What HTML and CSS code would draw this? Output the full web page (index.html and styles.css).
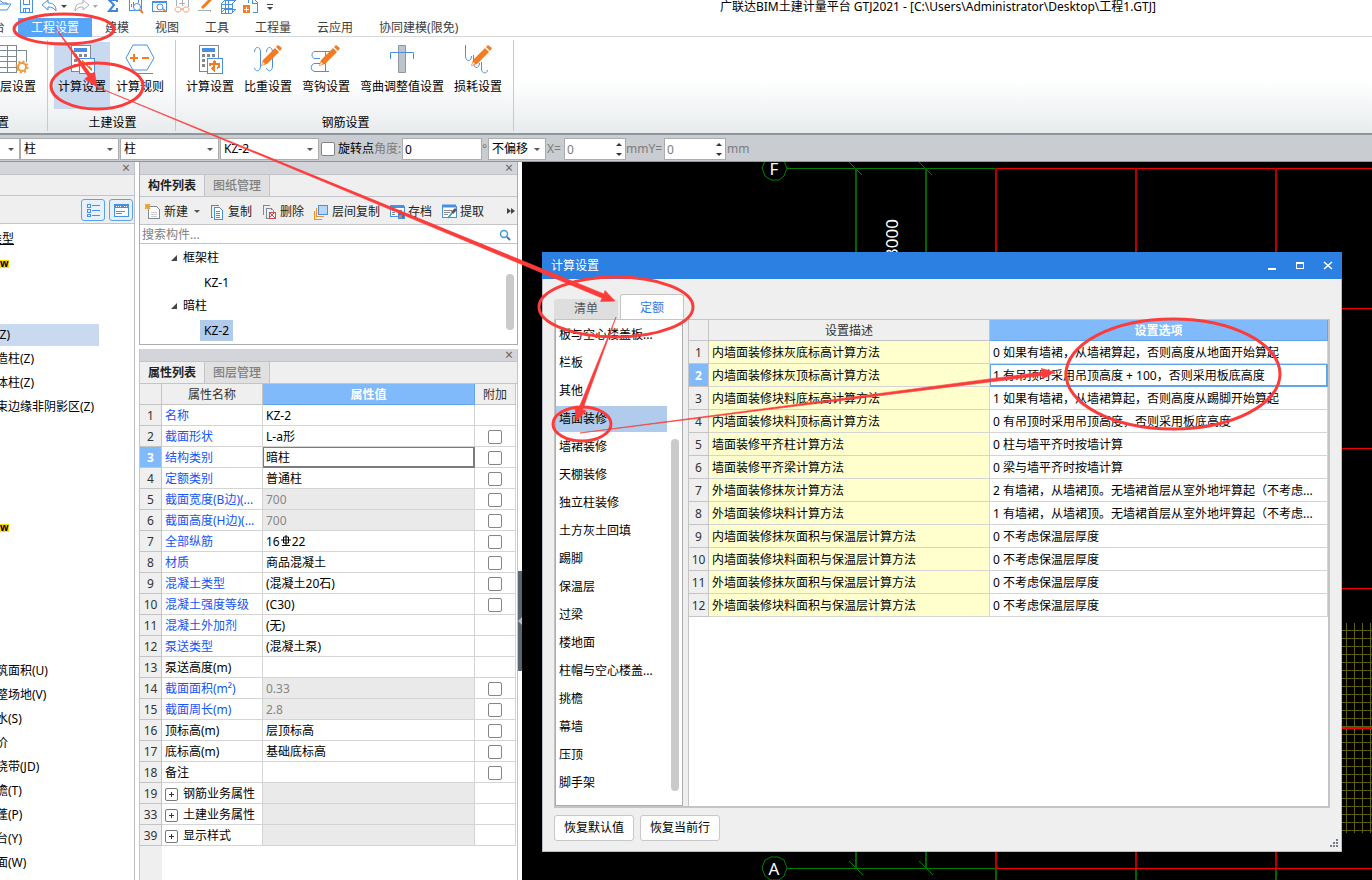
FILE: index.html
```html
<!DOCTYPE html>
<html lang="zh-CN">
<head>
<meta charset="utf-8">
<title>广联达BIM土建计量平台 GTJ2021</title>
<link rel="stylesheet" href="styles.css">
</head>
<body>
<div class="app">
  <header class="titlebar">
    <div class="quick">
      <button aria-label="打开"><svg width="16" height="14" class="ln b"><path d="M1 10V1h5l2 2h4v2M1 10l4-6h11l-4 6z"/></svg></button>
      <button aria-label="保存"><svg width="16" height="14" class="ln b cr"><path d="M2 -2h12v14H2zM5 -2v6h6v-6M5 12V8h6V12M7 12V9"/></svg></button>
      <button aria-label="撤销"><svg width="26" height="14" class="ln b"><path d="M1 5l6-5v3c5 0 8 2 8 8-2-3-4-4-8-4v3z"/><path class="fd" d="M20 5h6l-3 3z"/></svg></button>
      <button aria-label="恢复"><svg width="24" height="14" class="ln g"><path d="M15 5l-6-5v3C4 3 1 5 1 11c2-3 4-4 8-4v3z"/><path class="fg" d="M19 5h5l-3 3z"/></svg></button>
      <button aria-label="汇总"><svg width="16" height="14" class="ln b2"><path d="M12 2V0H4l5 5-5 6h8V8"/></svg></button>
      <button aria-label="查看计算式"><svg width="16" height="14" class="ln b"><path class="cr" d="M1 -2h12v12H1zM3 7V4M5 7V2M7 7V4M10 0v3"/><circle cx="9" cy="7" r="3.500" fill="#fff"/><path class="o2" d="M12 10l3 3"/></svg></button>
      <button aria-label="查看工程量"><svg width="16" height="14" class="ln b"><path class="cr" d="M1 1h14v10H1z"/><path d="M1 2h14" stroke-width="2"/><circle cx="9" cy="7" r="3" fill="#fff"/><path class="o2" d="M12 9l3 3"/></svg></button>
      <button aria-label="查看钢筋"><svg width="16" height="14" class="ln g"><path class="cr" d="M2 -2h12v9M2 -2v8M5 3h6M8 0v6"/><path class="o1" d="M4 7c-4 0-4 5 0 5s4-5 0-5M12 7c-4 0-4 5 0 5s4-5 0-5M6 9h4"/></svg></button>
      <button aria-label="编辑"><svg width="16" height="14" class="ln g"><path class="cr" d="M1 10h12v2"/><path stroke="#f47b20" stroke-width="3" d="M14-1L5 8"/></svg></button>
      <button aria-label="三维"><svg width="16" height="14" class="ln b cr"><path d="M1 4l4-4h11v9l-4 4H1zM1 4h11v9M12 4l4-4M5 0v9h11M5 9l-4 4M1 8h11M5 4v9M8 4v9M8 0v9"/></svg></button>
      <button aria-label="新增"><svg width="16" height="14" class="ln b cr"><path d="M5 3V-2h5l4 4v10h-4M9-1v4h5"/><path fill="#f47b20" stroke="none" d="M0 5h7v8H0z"/><path stroke="#fff" d="M3.500 6.500v5M1 9h5"/></svg></button>
      <button aria-label="更多"><svg width="8" height="14"><path class="fd" d="M1 4h6v1H1zM1 7h6L4 10z"/></svg></button>
    </div>
    <h1>广联达BIM土建计量平台 GTJ2021 - [C:\Users\Administrator\Desktop\工程1.GTJ]</h1>
  </header>

  <nav class="menu">
    <a href="#">台</a><a href="#" class="on">工程设置</a><a href="#">建模</a><a href="#">视图</a><a href="#">工具</a><a href="#">工程量</a><a href="#">云应用</a><a href="#">协同建模(限免)</a>
  </nav>

  <section class="ribbon">
    <div class="group first">
      <div class="tools">
        <button><svg width="32" height="32" class="ln d"><path class="cr" d="M0 2h16v27H0M0 7h16M0 13h16M0 18h16M0 24h16M7 2v27M16 7h10v12"/><circle cx="22" cy="24" r="4" stroke="#f09a3a" stroke-width="2" fill="#fff"/><circle cx="22" cy="24" r="5.500" stroke="#f09a3a" stroke-width="2" stroke-dasharray="2 2.300"/></svg><span>层设置</span></button>
      </div>
      <div class="cap">置</div>
    </div>
    <div class="group g2">
      <div class="tools">
        <button class="on"><svg width="32" height="32" class="ln d cr"><path fill="#fff" d="M5 2h19v26H5z"/><path fill="#4a90e2" stroke="none" d="M8 5h13v4H8z"/><path stroke-width="3" stroke-dasharray="3 2" d="M8 12.500h14M8 17.500h5M8 22.500h5"/><path stroke="#4a90e2" fill="#fff" d="M13 15h15v15H13z"/><path stroke="#f47b20" stroke-width="2" d="M16 18l10 9"/></svg><span>计算设置</span></button>
        <button><svg width="32" height="32" class="ln b"><path d="M9 2h14l7 13-7 12H9L2 15z"/><path class="cr" d="M9 30h20"/><path stroke="#f47b20" stroke-width="2" d="M6 15h8M10 11v8M18 15h7"/></svg><span>计算规则</span></button>
      </div>
      <div class="cap">土建设置</div>
    </div>
    <div class="group g3">
      <div class="tools">
        <button><svg width="32" height="32" class="ln d cr"><path fill="#fff" d="M5 2h19v26H5z"/><path fill="#4a90e2" stroke="none" d="M8 5h13v4H8z"/><path stroke-width="3" stroke-dasharray="3 2" d="M8 12.500h14M8 17.500h5M8 22.500h5"/><path stroke="#4a90e2" fill="#fff" d="M13 15h15v15H13z"/><path stroke="#f47b20" stroke-width="2" d="M20 18v9l-2-2M16 23v-2h9v3l-2 1M20 18l2 2"/></svg><span>计算设置</span></button>
        <button><svg width="32" height="32" class="ln b"><path d="M2.500 9c0-6 6-6 6 0v14c0 6-5 6-6 2M14.500 9c0-6 6-6 6 0v14c0 6-5 6-6 2"/><use href="#pencil"/></svg><span>比重设置</span></button>
        <button><svg width="32" height="32" class="ln b"><path d="M20 8.500H5c-4 0-4 7 0 7h5M13 20.500H5c-5 0-5 8 0 8h14M15.500 8v20M12 8.500h6M12 28.500h6"/><use href="#pencil"/></svg><span>弯钩设置</span></button>
        <button><svg width="32" height="32" class="ln b"><path fill="#bcc3c9" stroke="#8f989f" d="M12.500 2.500h7v27h-7z"/><path d="M4.500 16V9.500h23V16"/></svg><span>弯曲调整值设置</span></button>
        <button><svg width="32" height="32" class="ln b"><path d="M3.500 2v11c0 6 6 6 6 0M11.500 12v8c0 6 6 6 6 0M19.500 19v7c0 5 6 5 6 1"/><use href="#pencil"/></svg><span>损耗设置</span></button>
      </div>
      <div class="cap">钢筋设置</div>
    </div>
  </section>

  <form class="options">
    <label class="sel w0"><select aria-label="楼层"><option></option></select></label>
    <label class="sel w1"><select aria-label="构件大类"><option>柱</option></select></label>
    <label class="sel w1"><select aria-label="构件类型"><option>柱</option></select></label>
    <label class="sel w1"><select aria-label="构件"><option>KZ-2</option></select></label>
    <label class="chk"><input type="checkbox">旋转点</label>
    <label class="fld"><span class="dim">角度:</span><input class="ang" type="text" value="0"><span class="deg dim">°</span></label>
    <label class="sel w2"><select aria-label="偏移"><option>不偏移</option></select></label>
    <label class="fld dim"><span class="x">X=</span><span class="spin"><input type="text" value="0"></span></label>
    <label class="fld dim"><span class="y">mmY=</span><span class="spin"><input type="text" value="0"></span><span class="mm">mm</span></label>
  </form>

  <main>
    <aside class="left">
      <div class="strip"><button aria-label="关闭">×</button></div>
      <div class="blank"></div>
      <div class="views">
        <button aria-label="列表"><svg width="14" height="14" class="ln b cr"><path d="M1 1h3v3H1zM1 6h3v3H1zM1 11h3v2H1zM6 2h8M6 7h8M6 12h8"/></svg></button>
        <button aria-label="卡片"><svg width="16" height="14" class="ln b cr"><path fill="#fff" d="M1 1h14v12H1zM3 8h9M3 10h6"/><path stroke-width="4" d="M1 3h14"/><path stroke="#fff" stroke-dasharray="1 1" d="M3 3h5M11 3h3"/></svg></button>
      </div>
      <ul>
        <li class="root">类型</li><li><b>w</b></li><li></li><li></li>
        <li class="on">(Z)</li><li>造柱(Z)</li><li>体柱(Z)</li><li>束边缘非阴影区(Z)</li>
        <li></li><li></li><li></li><li></li><li><b>w</b></li><li></li><li></li><li></li><li></li><li></li>
        <li>筑面积(U)</li><li>整场地(V)</li><li>水(S)</li><li>价</li><li>浇带(JD)</li><li>檐(T)</li><li>蓬(P)</li><li>台(Y)</li><li>面(W)</li>
      </ul>
    </aside>

    <div class="center">
      <section class="panel list">
        <div class="strip"><button aria-label="关闭">×</button></div>
        <div class="tabs"><button class="on">构件列表</button><button>图纸管理</button></div>
        <div class="bar">
          <button><svg width="18" height="16" class="ln d"><path class="cr" fill="#fff" d="M5 2h6l3 3v9H3V5"/><path class="cr" d="M6 8h6M6 10h6M6 12h6" stroke="#ccc"/><path stroke="#f4a020" stroke-width="1.500" d="M0 0l5 5M5 0L0 5M2.500 0v5M0 2.500h5"/></svg>新建<i class="tri"></i></button>
          <button><svg width="18" height="16" class="ln b cr"><path stroke="#788088" d="M10 1H2v12h2"/><path fill="#fff" d="M5 3h5l3 3v9H5z"/><path d="M7 7h4M7 9h4M7 11h4M7 13h4"/></svg>复制</button>
          <button><svg width="18" height="16" class="ln d cr"><path d="M9 1H2v9h1M12 8V6l-3-2H5v10h3"/><path fill="#fff" stroke="#d84848" d="M8 8h6v6H8zM8 8l6 6M14 8l-6 6"/></svg>删除</button>
          <button><svg width="18" height="16" class="ln b cr"><path fill="#b6d6fb" d="M5 1h9v9H5z"/><path stroke="#f09030" d="M3 4v8h8M1 7v8h8"/></svg>层间复制</button>
          <button><svg width="18" height="16" class="ln b cr"><path fill="#fff" d="M1 2h14v10H1z"/><path stroke-width="3" d="M1 2h14"/><path stroke="#888" d="M3 6h3M3 8h3M3 10h3M7 6h6"/><path fill="#2f70c8" d="M9 8h6v6H9z"/><path fill="#f47b20" stroke="none" d="M10 11h3v3h-3z"/></svg>存档</button>
          <button><svg width="18" height="16" class="ln b"><path class="cr" fill="#fff" d="M1 2h14v11H1z"/><path stroke-width="3" d="M1 2h14"/><path class="cr" stroke="#888" d="M3 6h8M3 8h6M3 10h4"/><path stroke="#555" stroke-width="3" d="M15 5l-4 4"/><path stroke="#3aa8b8" stroke-width="2" d="M11 9l-4 5"/></svg>提取</button>
          <button class="more" aria-label="更多"><svg width="8" height="8"><path class="fd" d="M0 0l4 3-4 3zM4 0l4 3-4 3z"/></svg></button>
        </div>
        <label class="search"><input type="search" placeholder="搜索构件..." aria-label="搜索构件"><svg width="12" height="12" class="ln"><circle cx="5" cy="5" r="3.500" stroke="#3d9ad0" stroke-width="1.500"/><path stroke="#3d7ac0" stroke-width="2" d="M8 8l3 3"/></svg></label>
        <div class="tree">
          <ul>
            <li class="p"><svg width="8" height="8"><path class="fd" d="M7 1v6H1z"/></svg>框架柱</li>
            <li class="c"><span>KZ-1</span></li>
            <li class="p"><svg width="8" height="8"><path class="fd" d="M7 1v6H1z"/></svg>暗柱</li>
            <li class="c"><span class="on">KZ-2</span></li>
          </ul>
          <i class="thumb"></i>
        </div>
      </section>

      <section class="panel props">
        <div class="strip"><button aria-label="关闭">×</button></div>
        <div class="tabs"><button class="on">属性列表</button><button>图层管理</button></div>
        <div class="grid">
          <table>
            <colgroup><col class="c1"><col class="c2"><col><col class="c4"></colgroup>
            <thead><tr><th></th><th>属性名称</th><th class="hl">属性值</th><th>附加</th></tr></thead>
            <tbody>
            <tr><th>1</th><td class="k">名称</td><td>KZ-2</td><td></td></tr>
            <tr><th>2</th><td class="k">截面形状</td><td>L-a形</td><td><input type="checkbox" aria-label="附加 截面形状"></td></tr>
            <tr class="cur"><th>3</th><td class="k">结构类别</td><td class="edit">暗柱</td><td><input type="checkbox" aria-label="附加 结构类别"></td></tr>
            <tr><th>4</th><td class="k">定额类别</td><td>普通柱</td><td><input type="checkbox" aria-label="附加 定额类别"></td></tr>
            <tr><th>5</th><td class="k">截面宽度(B边)(...</td><td class="ro">700</td><td><input type="checkbox" aria-label="附加 截面宽度"></td></tr>
            <tr><th>6</th><td class="k">截面高度(H边)(...</td><td class="ro">700</td><td><input type="checkbox" aria-label="附加 截面高度"></td></tr>
            <tr><th>7</th><td class="k">全部纵筋</td><td>16<svg class="bar-sym" width="12" height="12"><path fill="none" stroke="#000" d="M6 0v10M3.500 2v6h5V2zM1 5h10M2 10.500h8"/></svg>22</td><td><input type="checkbox" aria-label="附加 全部纵筋"></td></tr>
            <tr><th>8</th><td class="k">材质</td><td>商品混凝土</td><td><input type="checkbox" aria-label="附加 材质"></td></tr>
            <tr><th>9</th><td class="k">混凝土类型</td><td>(混凝土20石)</td><td><input type="checkbox" aria-label="附加 混凝土类型"></td></tr>
            <tr><th>10</th><td class="k">混凝土强度等级</td><td>(C30)</td><td><input type="checkbox" aria-label="附加 混凝土强度等级"></td></tr>
            <tr><th>11</th><td class="k">混凝土外加剂</td><td>(无)</td><td></td></tr>
            <tr><th>12</th><td class="k">泵送类型</td><td>(混凝土泵)</td><td></td></tr>
            <tr><th>13</th><td>泵送高度(m)</td><td></td><td></td></tr>
            <tr><th>14</th><td class="k">截面面积(m²)</td><td class="ro">0.33</td><td><input type="checkbox" aria-label="附加 截面面积"></td></tr>
            <tr><th>15</th><td class="k">截面周长(m)</td><td class="ro">2.8</td><td><input type="checkbox" aria-label="附加 截面周长"></td></tr>
            <tr><th>16</th><td>顶标高(m)</td><td>层顶标高</td><td><input type="checkbox" aria-label="附加 顶标高"></td></tr>
            <tr><th>17</th><td>底标高(m)</td><td>基础底标高</td><td><input type="checkbox" aria-label="附加 底标高"></td></tr>
            <tr><th>18</th><td>备注</td><td></td><td><input type="checkbox" aria-label="附加 备注"></td></tr>
            <tr><th>19</th><td><button class="plus" aria-label="展开"></button>钢筋业务属性</td><td class="ro"></td><td></td></tr>
            <tr><th>33</th><td><button class="plus" aria-label="展开"></button>土建业务属性</td><td class="ro"></td><td></td></tr>
            <tr><th>39</th><td><button class="plus" aria-label="展开"></button>显示样式</td><td class="ro"></td><td></td></tr>
            </tbody>
          </table>
        </div>
      </section>
    </div>

    <div class="gutter"><button aria-label="收起"><svg width="4" height="8"><path fill="#b8c0c6" d="M4 0v8L0 4z"/></svg></button></div>

    <div class="canvas">
      <svg class="cad" width="850" height="718" fill="none" shape-rendering="crispEdges">
        <g stroke="#5f5f0c">
          <path d="M820 468.500h30M820 476.500h30M820 484.500h30M820 492.500h30M820 500.500h30M820 508.500h30M820 516.500h30M820 524.500h30M820 532.500h30M820 540.500h30M820 548.500h30M820 556.500h30M820 564.500h30M820 572.500h30M820 580.500h30M820 588.500h30M820 596.500h30M820 604.500h30M820 612.500h30M820 620.500h30M820 628.500h30M820 636.500h30M820 644.500h30M820 652.500h30M820 660.500h30M820 668.500h30M824.500 461v210M832.500 461v210M840.500 461v210M848.500 461v210"/>
        </g>
        <g stroke="#008000">
          <path d="M265 6.500h209M265 706.500h209M327 0l13 13M397 0l13 13M327 699l14 14M397 699l14 14"/>
          <path stroke="#006400" stroke-width="2" d="M334 6v700M404 6v700M474 706v12M614 706v12M754 706v12"/>
          <path shape-rendering="auto" d="M240 6l3-7 6-4h7l6 4 3 7-3 8-5 4h-8l-6-4zM240 706l3-8 6-3h7l6 3 3 8-3 8-5 4h-8l-6-4z"/>
        </g>
        <g stroke="#f00000">
          <path d="M474 6.500h376M474 706.500h376M820 146.500h30M820 286.500h30M820 426.500h30"/>
          <path stroke="#b80000" stroke-width="2" d="M474 6v700M614 6v700M754 6v700"/>
          <path stroke-width="2" d="M820 566h30"/>
        </g>
        <g class="cadtext"><text x="252" y="13" text-anchor="middle">F</text><text x="252" y="713" text-anchor="middle">A</text><text transform="translate(376 57) rotate(-90)" text-anchor="end">3000</text></g>
      </svg>

      <section class="dialog" role="dialog" aria-label="计算设置">
        <header><h2>计算设置</h2>
          <button aria-label="最小化"><svg width="12" height="12"><path fill="#fff" d="M2 8h8v2H2z"/></svg></button>
          <button aria-label="最大化"><svg width="12" height="12"><path fill="#fff" fill-rule="evenodd" d="M2 2h8v7H2zM3 4v4h6V4z"/></svg></button>
          <button aria-label="关闭"><svg width="12" height="12"><path stroke="#fff" stroke-width="1.500" d="M2 2l8 7M10 2l-8 7"/></svg></button>
        </header>
        <div class="dtabs"><button>清单</button><button class="on">定额</button></div>
        <div class="dbody">
          <div class="cats">
            <ul>
              <li>板与空心楼盖板...</li><li>栏板</li><li>其他</li><li class="on">墙面装修</li><li>墙裙装修</li><li>天棚装修</li><li>独立柱装修</li><li>土方灰土回填</li><li>踢脚</li><li>保温层</li><li>过梁</li><li>楼地面</li><li>柱帽与空心楼盖...</li><li>挑檐</li><li>幕墙</li><li>压顶</li><li>脚手架</li>
            </ul>
            <i class="thumb"></i>
          </div>
          <div class="rules">
            <table>
              <colgroup><col class="r1"><col class="r2"><col></colgroup>
              <thead><tr><th></th><th>设置描述</th><th class="hl">设置选项</th></tr></thead>
              <tbody>
              <tr><th>1</th><td>内墙面装修抹灰底标高计算方法</td><td>0 如果有墙裙，从墙裙算起，否则高度从地面开始算起</td></tr>
              <tr class="cur"><th>2</th><td>内墙面装修抹灰顶标高计算方法</td><td class="edit">1 有吊顶时采用吊顶高度 + 100，否则采用板底高度</td></tr>
              <tr><th>3</th><td>内墙面装修块料底标高计算方法</td><td>1 如果有墙裙，从墙裙算起，否则高度从踢脚开始算起</td></tr>
              <tr><th>4</th><td>内墙面装修块料顶标高计算方法</td><td>0 有吊顶时采用吊顶高度，否则采用板底高度</td></tr>
              <tr><th>5</th><td>墙面装修平齐柱计算方法</td><td>0 柱与墙平齐时按墙计算</td></tr>
              <tr><th>6</th><td>墙面装修平齐梁计算方法</td><td>0 梁与墙平齐时按墙计算</td></tr>
              <tr><th>7</th><td>外墙面装修抹灰计算方法</td><td>2 有墙裙，从墙裙顶。无墙裙首层从室外地坪算起（不考虑...</td></tr>
              <tr><th>8</th><td>外墙面装修块料计算方法</td><td>1 有墙裙，从墙裙顶。无墙裙首层从室外地坪算起（不考虑...</td></tr>
              <tr><th>9</th><td>内墙面装修抹灰面积与保温层计算方法</td><td>0 不考虑保温层厚度</td></tr>
              <tr><th>10</th><td>内墙面装修块料面积与保温层计算方法</td><td>0 不考虑保温层厚度</td></tr>
              <tr><th>11</th><td>外墙面装修抹灰面积与保温层计算方法</td><td>0 不考虑保温层厚度</td></tr>
              <tr><th>12</th><td>外墙面装修块料面积与保温层计算方法</td><td>0 不考虑保温层厚度</td></tr>
              </tbody>
            </table>
          </div>
        </div>
        <footer><button>恢复默认值</button><button>恢复当前行</button>
          <svg class="grip" width="8" height="8"><path fill="#777f88" d="M6 0h2v2H6zM3 3h2v2H3zM6 3h2v2H6zM0 6h2v2H0zM3 6h2v2H3zM6 6h2v2H6z"/></svg>
        </footer>
      </section>
    </div>
  </main>

  <svg class="marks" width="1372" height="880" aria-hidden="true">
    <defs><g id="pencil" stroke="none"><path fill="#f47b20" d="M9 23l2-6L23 5l4 4-12 12zM24 4l2-2 4 3-2 3z"/><path fill="#fff" d="M10 22l1-3 2 2z"/></g></defs>
    <g fill="none" stroke="#fb3c3a" stroke-width="3">
      <ellipse cx="64" cy="29" rx="50" ry="15"/>
      <ellipse cx="97" cy="86" rx="46" ry="23"/>
      <ellipse cx="616" cy="307" rx="77" ry="30"/>
      <ellipse cx="582" cy="424" rx="29" ry="17"/>
      <ellipse cx="1173" cy="374" rx="107" ry="55"/>
    </g>
    <g fill="#fb3c3a" stroke="#fb3c3a" stroke-width=".6">
      <path d="M55 27L91 74.200 94.500 72 97 87 84.600 79 88 76.600z"/>
      <path d="M97 87L604 294 605 290.500 615 301 600.700 301.500 602 298z"/>
      <path d="M616 317L582.600 409.600 586.300 411 576 421 575 406.700 578.800 408.200z"/>
      <path d="M580 433L1042 372 1041.400 368.500 1055 372 1042.600 378.700 1042 375.500z"/>
    </g>
  </svg>
</div>
</body>
</html>
```
FILE: styles.css
```css
* { box-sizing: border-box; }
body {
  margin: 0;
  overflow: hidden;
  font: 12px/16px "Noto Sans", "Noto Sans CJK SC", sans-serif;
  color: #000;
  background: #fff;
}
button, input, select { font: inherit; color: inherit; margin: 0; padding: 0; border: 0; background: none; border-radius: 0; }
button { display: flex; align-items: center; }
h1, h2, ul { margin: 0; padding: 0; font: inherit; list-style: none; }
svg { flex: none; display: block; }
.app { position: relative; display: flex; flex-direction: column; height: 100vh; min-height: 880px; overflow: hidden; }

/* icon strokes */
.ln { fill: none; stroke-width: 1; }
.cr { shape-rendering: crispEdges; }
.b { stroke: #4a90e2; }
.b2 { stroke: #3f86d8; stroke-width: 2; }
.g { stroke: #a9b0b6; }
.d { stroke: #7f8991; }
.o1 { stroke: #f0a070; }
.o2 { stroke: #f47b20; stroke-width: 2; }
.fd { fill: #444; stroke: none; }
.fg { fill: #aaa; stroke: none; }

/* title and menu */
.titlebar { display: flex; height: 18px; align-items: flex-start; }
.quick { display: flex; gap: 7px; margin-left: -5px; }
.titlebar h1 { flex: 1; padding-left: 230px; text-align: center; line-height: 14px; white-space: nowrap; }
.menu { display: flex; height: 19px; margin-left: -20px; border-bottom: 1px solid #d5d7d9; }
.menu a { padding: 0 13px; line-height: 19px; height: 19px; color: #3c3c3c; text-decoration: none; white-space: nowrap; }
.menu .on { background: #57a5f8; color: #fff; }

/* ribbon */
.ribbon { display: flex; height: 98px; padding: 3px 0 2px; background: linear-gradient(#fff 45%, #e8ebed); border-bottom: 2px solid #8f979e; }
.group { display: flex; flex-direction: column; justify-content: space-between; border-right: 1px solid #c6cacc; }
.group .tools { display: flex; gap: 2px; padding-top: 2px; }
.group.first { width: 48px; }
.group.first button { padding: 1px 0 0; align-items: flex-start; }
.group.g2 { width: 128px; padding-left: 6px; }
.group.g3 { width: 338px; padding-left: 6px; }
.tools button { flex-direction: column; gap: 4px; height: 67px; padding: 1px 4px 0; white-space: nowrap; }
.tools .on { background: #c8d9f0; }
.cap { text-align: center; }
.g2 .cap, .g3 .cap { margin-left: -4px; }
.first .cap { text-align: left; margin-left: -3px; }

/* option bar */
.options { display: flex; align-items: center; height: 27px; padding-top: 2px; background: #c9ccd1; border-bottom: 1px solid #8f979e; white-space: nowrap; }
.sel { position: relative; height: 22px; margin-right: 1px; background: #fff; border: 1px solid #acacac; }
.sel::after { content: ""; position: absolute; right: 5px; top: 9px; border: 3px solid transparent; border-top-color: #555; border-bottom: 0; }
.sel select { appearance: none; width: 100%; height: 20px; padding-left: 3px; outline: 0; }
.w0 { width: 20px; border-left: 0; margin-right: 0; }
.w1 { width: 99px; }
.w2 { width: 58px; }
.chk { display: flex; align-items: center; gap: 3px; padding-left: 1px; }
input[type="checkbox"] { appearance: none; display: block; width: 14px; height: 14px; border: 1px solid #858585; border-radius: 2px; background: #fff; }
.fld { display: flex; align-items: center; }
.dim { color: #7c7c7c; }
.fld input { height: 22px; padding-left: 2px; border: 1px solid #acacac; background: #fff; }
.ang { width: 80px; color: #000; }
.deg { width: 6px; }
.spin { position: relative; }
.spin input { width: 62px; display: block; }
.spin::before, .spin::after { content: ""; position: absolute; right: 4px; border: 3px solid transparent; }
.spin::before { top: 5px; border-bottom-color: #333; border-top: 0; }
.spin::after { bottom: 4px; border-top-color: #333; border-bottom: 0; }
.x { width: 17px; }
.y { width: 38px; }
.chk + .fld { width: 114px; }
.fld .dim:first-child { width: 28px; }
.mm { padding-left: 1px; }

/* work area */
main { flex: 1; display: flex; min-height: 0; }
.strip { display: flex; justify-content: flex-end; align-items: center; height: 13px; padding-right: 4px; background: #d3d5da; border-bottom: 1px solid #c2c4ca; }
.strip button { font-size: 14px; line-height: 12px; color: #666; }
.left { width: 135px; border-right: 1px solid #bfc1c7; overflow: hidden; }
.blank { height: 21px; background: #efefef; border-bottom: 1px solid #c2c4ca; }
.views { display: flex; justify-content: flex-end; gap: 4px; height: 28px; padding: 3px 1px; background: #efefef; border-bottom: 1px solid #c2c4ca; }
.views button { width: 24px; height: 22px; justify-content: center; border: 1px solid #5aa2f0; border-radius: 3px; background: #e6f1fd; }
.left ul { padding-top: 3px; }
.left li { height: 24px; margin-left: -4px; line-height: 24px; white-space: nowrap; }
.left .root { margin-left: -10px; text-decoration: underline; }
.left li b { display: inline-block; margin-left: 4px; height: 8px; line-height: 7px; background: #ffdc00; font-size: 10px; }
.left .on { width: 103px; height: 22px; margin-top: 1px; margin-bottom: 1px; line-height: 22px; background: #c8d9f0; }

.center { display: flex; flex-direction: column; gap: 4px; flex: none; width: 379px; margin-left: 4px; }
.panel { border: 1px solid #c2c4ca; border-top: 0; }
.list { border-color: #aaacb0; }
.props { flex: 1; display: flex; flex-direction: column; border-bottom: 0; min-height: 0; }
.tabs { display: flex; height: 22px; background: #efefef; border-bottom: 1px solid #c2c4ca; }
.tabs button { width: 65px; justify-content: center; color: #808080; background: #e0e0e0; border-right: 1px solid #c2c4ca; font-weight: 500; }
.tabs .on { color: #222; background: #efefef; font-weight: 600; }
.bar { display: flex; height: 28px; padding: 2px 0 0 5px; gap: 9px; align-items: center; background: #efefef; border-bottom: 1px solid #c2c4ca; color: #222; }
.bar button { white-space: nowrap; gap: 1px; }
.tri { margin-left: 5px; border: 3px solid transparent; border-top-color: #555; border-bottom: 0; }
.bar .more { margin-left: auto; margin-right: 2px; }
.search { display: flex; align-items: center; height: 19px; padding: 1px 6px 0 2px; border-bottom: 1px solid #c2c4ca; }
.search input { flex: 1; appearance: none; outline: 0; }
.search input::placeholder { color: #808080; opacity: 1; }
.tree { position: relative; height: 100px; padding-top: 2px; }
.tree li { display: flex; align-items: center; height: 24px; }
.p { padding-left: 30px; gap: 5px; }
.c { padding-left: 60px; }
.c span { padding: 0 4px; line-height: 21px; }
.c .on { background: #b1cbec; }
.thumb { position: absolute; width: 8px; border-radius: 4px; background: #cacaca; }
.tree .thumb { right: 3px; top: 30px; height: 56px; }

table { border-collapse: separate; border-spacing: 0; table-layout: fixed; width: 100%; }
th, td { padding: 0; border-right: 1px solid #d4d4d4; border-bottom: 1px solid #d4d4d4; white-space: nowrap; overflow: hidden; font-weight: 400; text-align: left; }
th { background: #efefef; color: #333; text-align: center; border-color: #c4c4c4; }
th.hl { background: #80bafa; color: #fff; font-weight: 600; border-color: #62a5ea; }
.cur th { background: #80bafa; color: #fff; font-weight: 700; }
.grid { flex: 1; padding-right: 1px; background: linear-gradient(90deg, #efefef 22px, #fff 22px); overflow: hidden; }
.grid tr { height: 21px; }
.grid th, .grid td { padding-top: 1px; line-height: 19px; }
.grid td { padding-left: 3px; }
.grid .c1 { width: 22px; }
.grid .c2 { width: 101px; }
.grid .c4 { width: 41px; }
.grid .k { color: #1455f5; }
.grid .ro { background: #eaeaea; color: #868686; }
.grid .edit { border-color: #7b7b7b; box-shadow: inset 0 0 0 1px #7b7b7b; }
td input[type="checkbox"] { margin-left: 10px; }
.bar-sym { display: inline-block; vertical-align: -1px; }
.plus { display: inline-flex; width: 13px; height: 13px; margin-right: 5px; border: 1px solid #777; border-radius: 2px; vertical-align: -2px; background: linear-gradient(#333, #333) center / 5px 1px no-repeat, linear-gradient(#333, #333) center / 1px 5px no-repeat; }

.gutter { display: flex; align-items: center; width: 4px; flex: none; padding-top: 200px; }
.gutter button { width: 4px; height: 100px; background: #5a6670; }

/* drawing area */
.canvas { position: relative; flex: 1; min-width: 0; background: #000; overflow: hidden; }
.cad { position: absolute; left: 0; top: 0; }
.cadtext { fill: #fff; font: 17px "Noto Sans", sans-serif; }

.dialog { position: absolute; inset: 90px 30px 28px 20px; display: flex; flex-direction: column; background: #efefef; border: 1px solid #b9bdc6; border-top: 0; }
.dialog header { display: flex; align-items: center; gap: 16px; height: 27px; flex: none; margin: 0 -1px; padding: 0 8px 0 9px; background: #2c80e2; color: #fff; }
.dialog h2 { flex: 1; }
.dtabs { display: flex; align-items: flex-end; gap: 2px; height: 40px; flex: none; padding-left: 11px; }
.dtabs button { width: 64px; height: 20px; justify-content: center; border-radius: 3px 3px 0 0; background: #dedede; color: #555; }
.dtabs .on { height: 25px; padding-top: 1px; background: #fff; border: 1px solid #c4c4c4; border-bottom: 0; color: #2c80e2; }
.dbody { flex: 1; display: flex; gap: 5px; min-height: 0; margin: 0 11px; border: solid #c4c4c4; border-width: 1px 2px 2px 1px; }
.cats { position: relative; width: 128px; flex: none; padding-top: 1px; background: #fff; border: 1px solid #aaacb0; border-top: 0; }
.cats li { height: 28px; padding-left: 3px; line-height: 28px; white-space: nowrap; }
.cats .on { width: 111px; height: 26px; margin: 1px 0; line-height: 26px; background: #b1cbec; }
.cats .thumb { right: 3px; top: 119px; bottom: 14px; }
.rules { flex: 1; min-width: 0; background: #fff; border-left: 1px solid #c4c4c4; }
.rules thead tr { height: 21px; }
.rules tr { height: 23px; }
.rules th, .rules td { padding-top: 1px; }
.rules .r1 { width: 20px; }
.rules .r2 { width: 281px; }
.rules td { padding-left: 3px; }
.rules td:nth-child(2) { background: #ffffce; }
.rules .edit { box-shadow: inset 0 0 0 1px #62a5ea; border-color: #62a5ea; }
.dialog footer { display: flex; align-items: center; gap: 6px; height: 43px; flex: none; padding: 0 3px 4px 11px; }
.dialog footer button { width: 80px; height: 26px; justify-content: center; background: #fff; border: 1px solid #c8c8c8; border-radius: 3px; }
.grip { margin: 30px 0 0 auto; }

.marks { position: absolute; left: 0; top: 0; pointer-events: none; }
```
